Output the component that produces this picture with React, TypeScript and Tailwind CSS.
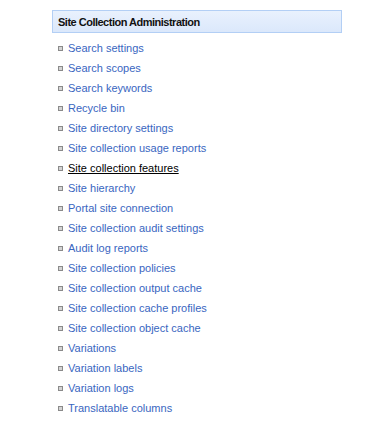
const LINKS = [
  "Search settings",
  "Search scopes",
  "Search keywords",
  "Recycle bin",
  "Site directory settings",
  "Site collection usage reports",
  "Site collection features",
  "Site hierarchy",
  "Portal site connection",
  "Site collection audit settings",
  "Audit log reports",
  "Site collection policies",
  "Site collection output cache",
  "Site collection cache profiles",
  "Site collection object cache",
  "Variations",
  "Variation labels",
  "Variation logs",
  "Translatable columns",
];

export default function App() {
  return (
    <div className="w-[387px] h-[430px] bg-white pt-[10px] pl-[52px]" style={{ fontFamily: "Tahoma, 'Liberation Sans', sans-serif" }}>
      {/* Section header */}
      <div className="w-[290px] h-[23px] flex items-center pl-[5px] pt-[1px] border border-[#b3cff5] bg-gradient-to-b from-[#e9f1fd] to-[#dbe8fb]">
        <span className="text-[11px] font-bold tracking-[-0.5px] text-[#111] leading-none">Site Collection Administration</span>
      </div>

      {/* Links */}
      <ul className="mt-[5px] flex flex-col">
        {LINKS.map((label) => {
          const active = label === "Site collection features";
          return (
            <li key={label} className="h-[20px] flex items-center pl-[6px]">
              <span className="w-[5px] h-[5px] border border-[#8a8a8a] bg-[#d4d4d4] mr-[5px] shrink-0" />
              <a
                href="#"
                className={
                  active
                    ? "text-[11px] text-black underline leading-none"
                    : "text-[11px] text-[#3966bf] leading-none"
                }
              >
                {label}
              </a>
            </li>
          );
        })}
      </ul>
    </div>
  );
}
